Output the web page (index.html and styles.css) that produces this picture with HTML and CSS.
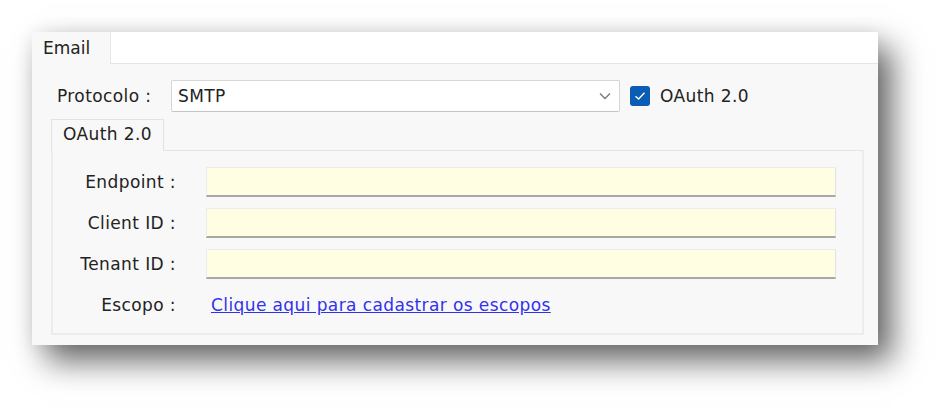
FILE: index.html
```html
<!DOCTYPE html>
<html lang="pt">
<head>
<meta charset="utf-8">
<title>Email</title>
<link rel="stylesheet" href="styles.css">
</head>
<body>
<div class="window">
  <div class="tabstrip">
    <div class="tab active">Email</div>
    <div class="tab-rest"></div>
  </div>
  <div class="content">
    <div class="proto-row">
      <span class="proto-label">Protocolo :</span>
      <div class="select">
        <span class="select-value">SMTP</span>
        <svg class="chevron" width="12" height="8" viewBox="0 0 12 8"><path d="M1 1.5 L6 6.5 L11 1.5" fill="none" stroke="#777" stroke-width="1.3"/></svg>
      </div>
      <span class="checkbox">
        <svg width="12" height="10" viewBox="0 0 12 10"><path d="M1.5 5.2 L4.6 8 L10.5 1.8" fill="none" stroke="#fff" stroke-width="1.4"/></svg>
      </span>
      <span class="check-label">OAuth 2.0</span>
    </div>
    <div class="inner">
      <div class="inner-tabs">
        <div class="inner-tab">OAuth 2.0</div>
      </div>
      <div class="inner-panel">
        <label class="field-label">Endpoint :</label>
        <div class="field-input"></div>
        <label class="field-label">Client ID :</label>
        <div class="field-input"></div>
        <label class="field-label">Tenant ID :</label>
        <div class="field-input"></div>
        <label class="field-label">Escopo :</label>
        <a class="field-link" href="#">Clique aqui para cadastrar os escopos</a>
      </div>
    </div>
  </div>
</div>
</body>
</html>
```

FILE: styles.css
```css
html, body {
  margin: 0;
  background: #ffffff;
}
body {
  min-height: 410px;
  box-sizing: border-box;
  padding: 32px 0 0 32px;
  font-family: "DejaVu Sans", Verdana, sans-serif;
  font-size: 17px;
  letter-spacing: 0.4px;
  color: #222;
}
.window {
  width: 846px;
  height: 313px;
  background: #f8f8f8;
  box-shadow: 14px 16px 30px rgba(0,0,0,0.6), 0 0 18px rgba(0,0,0,0.07);
  display: flex;
  flex-direction: column;
}
.tabstrip {
  display: flex;
  height: 32px;
}
.tab.active {
  width: 78px;
  box-sizing: border-box;
  padding: 6px 0 0 11px;
  background: #f8f8f8;
  color: #222;
  letter-spacing: 0;
}
.tab-rest {
  flex: 1;
  background: #ffffff;
  border-left: 1px solid #e6e6e6;
  border-bottom: 1px solid #e4e4e4;
}
.content {
  flex: 1;
  display: flex;
  flex-direction: column;
  padding: 16px 14px 10px 19px;
}
.proto-row {
  display: flex;
  align-items: center;
  height: 32px;
}
.proto-label {
  margin-left: 6px;
  width: 114px;
}
.select {
  width: 449px;
  height: 32px;
  box-sizing: border-box;
  background: #fff;
  border: 1px solid #d6d6d6;
  border-bottom-color: #c4c4c4;
  border-radius: 2px;
  display: flex;
  align-items: center;
  justify-content: space-between;
  padding: 0 8px 0 6px;
}
.select-value {
  color: #222;
}
.checkbox {
  margin-left: 10px;
  width: 20px;
  height: 20px;
  border-radius: 3px;
  background: #0b5cb5;
  display: flex;
  align-items: center;
  justify-content: center;
}
.check-label {
  margin-left: 10px;
}
.inner {
  margin-top: 7px;
  flex: 1;
  display: flex;
  flex-direction: column;
}
.inner-tabs {
  display: flex;
  height: 31px;
}
.inner-tab {
  width: 113px;
  box-sizing: border-box;
  border: 1px solid #e2e2e2;
  border-bottom: none;
  background: #f8f8f8;
  padding: 4px 0 0 11px;
  position: relative;
  z-index: 1;
  height: 32px;
}
.inner-panel {
  flex: 1;
  border: 2px solid #ececec;
  border-top-width: 1px;
  border-top-color: #e4e4e4;
  display: grid;
  grid-template-columns: 123px 1fr;
  column-gap: 30px;
  row-gap: 11px;
  grid-auto-rows: 30px;
  align-items: center;
  padding: 16px 26px 0 0;
  align-content: start;
}
.field-label {
  text-align: right;
}
.field-input {
  height: 30px;
  box-sizing: border-box;
  background: #fffee3;
  border: 1px solid #ececec;
  border-bottom: 2px solid #a8a8a8;
  border-right-color: #e2e2e2;
}
.field-link {
  color: #3232ee;
  text-decoration: underline;
  padding-left: 5px;
}
```
